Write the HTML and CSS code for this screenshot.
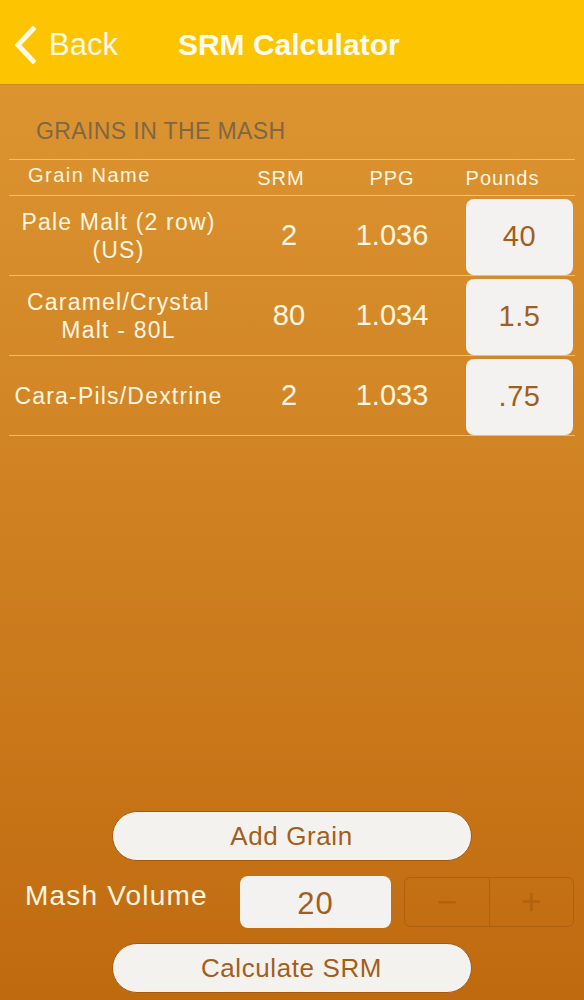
FILE: index.html
```html
<!DOCTYPE html>
<html lang="en">
<head>
  <meta charset="UTF-8" />
  <meta name="viewport" content="width=device-width, initial-scale=1.0" />
  <title>SRM Calculator</title>
  <link rel="stylesheet" href="styles.css">
</head>
<body>
  <header class="navbar">
    <a class="back" href="#">
      <svg class="chevron" width="24" height="38" viewBox="0 0 24 38">
        <path d="M20 3 L5 19 L20 35" fill="none" stroke="#fff8e6" stroke-width="5" stroke-linecap="square"/>
      </svg>
      <span>Back</span>
    </a>
    <h1 class="title">SRM Calculator</h1>
  </header>

  <main class="content">
    <h2 class="section-title">GRAINS IN THE MASH</h2>

    <div class="grain-table">
      <div class="row head">
        <div class="cell name">Grain Name</div>
        <div class="cell srm">SRM</div>
        <div class="cell ppg">PPG</div>
        <div class="cell lbs">Pounds</div>
      </div>

      <div class="row">
        <div class="cell name">Pale Malt (2 row)<br>(US)</div>
        <div class="cell srm">2</div>
        <div class="cell ppg">1.036</div>
        <div class="cell lbs"><span class="amount">40</span></div>
      </div>

      <div class="row">
        <div class="cell name">Caramel/Crystal<br>Malt - 80L</div>
        <div class="cell srm">80</div>
        <div class="cell ppg">1.034</div>
        <div class="cell lbs"><span class="amount">1.5</span></div>
      </div>

      <div class="row">
        <div class="cell name">Cara-Pils/Dextrine</div>
        <div class="cell srm">2</div>
        <div class="cell ppg">1.033</div>
        <div class="cell lbs"><span class="amount">.75</span></div>
      </div>
    </div>

    <div class="controls">
      <button class="pill">Add Grain</button>

      <div class="volume">
        <label class="volume-label" for="volume">Mash Volume</label>
        <input id="volume" class="volume-input" value="20">
        <div class="stepper">
          <span class="step">&minus;</span>
          <span class="step">+</span>
        </div>
      </div>

      <button class="pill">Calculate SRM</button>
    </div>
  </main>
</body>
</html>
```

FILE: styles.css
```css
html, body {
  margin: 0;
  padding: 0;
}
body {
  font-family: 'Liberation Sans', Arial, sans-serif;
  width: 584px;
  height: 1000px;
  display: flex;
  flex-direction: column;
  background: linear-gradient(#de9833, #d18424 45%, #c06a0f);
  color: #fff6e0;
  overflow: hidden;
}
.navbar {
  height: 84px;
  background-color: #fdc402;
  border-bottom: 1px solid #c98d1a;
  display: flex;
  align-items: center;
  flex-shrink: 0;
}
.back {
  display: flex;
  align-items: center;
  color: #fff8e6;
  text-decoration: none;
  font-size: 31px;
  margin-left: 13px;
  margin-top: 6px;
}
.back span {
  margin-left: 12px;
}
.title {
  margin: 6px 0 0 60px;
  font-size: 30px;
  font-weight: 700;
  color: #fffbf0;
}
.content {
  flex: 1;
  display: flex;
  flex-direction: column;
  padding: 0 9px 7px 9px;
}
.section-title {
  margin: 33px 0 0 27px;
  height: 41px;
  font-size: 23px;
  letter-spacing: 0.4px;
  font-weight: 400;
  color: #7d6748;
}
.grain-table {
  border-top: 1px solid rgba(255, 232, 190, 0.55);
}
.row {
  display: flex;
  height: 79px;
  border-bottom: 1px solid rgba(255, 232, 190, 0.55);
  align-items: center;
}
.row.head {
  height: 35px;
  font-size: 20px;
  letter-spacing: 1px;
}
.cell {
  text-align: center;
}
.name {
  width: 219px;
  font-size: 23px;
  letter-spacing: 1.2px;
  line-height: 28px;
}
.srm {
  width: 122px;
  font-size: 29px;
}
.ppg {
  width: 84px;
  font-size: 29px;
}
.lbs {
  flex: 1;
  display: flex;
  justify-content: flex-end;
}
.head .name {
  text-align: left;
  padding-left: 19px;
  box-sizing: border-box;
  font-size: 20px;
  letter-spacing: 1.5px;
  margin-top: -5px;
}
.head .srm {
  font-size: 20px;
  padding-right: 16px;
  box-sizing: border-box;
  margin-top: 2px;
}
.head .ppg {
  font-size: 20px;
  margin-top: 2px;
}
.head .lbs {
  justify-content: center;
  padding-right: 4px;
  margin-top: 2px;
}
.amount {
  width: 107px;
  height: 76px;
  margin: 2px 2px 0 0;
  background-color: #f3f2f0;
  border-radius: 8px;
  color: #a35e1b;
  font-size: 29px;
  letter-spacing: 0.5px;
  display: flex;
  align-items: center;
  justify-content: center;
}
.controls {
  margin-top: auto;
  display: flex;
  flex-direction: column;
  align-items: center;
  gap: 15px;
}
.pill {
  width: 360px;
  height: 50px;
  border-radius: 25px;
  border: 1px solid #a8580c;
  background-color: #f4f2ef;
  color: #a35e1b;
  font-family: 'Liberation Sans', Arial, sans-serif;
  font-size: 26px;
  letter-spacing: 0.6px;
  margin-right: 1px;
}
.volume {
  display: flex;
  align-items: center;
  align-self: stretch;
  height: 52px;
}
.volume-label {
  font-size: 28px;
  letter-spacing: 1.2px;
  margin-left: 16px;
  margin-top: -13px;
  width: 215px;
}
.volume-input {
  width: 151px;
  height: 52px;
  box-sizing: border-box;
  border: none;
  border-radius: 8px;
  background-color: #f3f2f0;
  color: #a35e1b;
  font-family: 'Liberation Sans', Arial, sans-serif;
  font-size: 31px;
  letter-spacing: 1px;
  text-align: center;
  padding: 4px 0 0;
}
.stepper {
  margin-left: 13px;
  width: 170px;
  height: 50px;
  box-sizing: border-box;
  border: 1px solid rgba(150, 80, 10, 0.45);
  border-radius: 6px;
  display: flex;
}
.step {
  flex: 1;
  display: flex;
  align-items: center;
  justify-content: center;
  font-size: 36px;
  color: rgba(150, 80, 10, 0.4);
}
.step + .step {
  border-left: 1px solid rgba(150, 80, 10, 0.45);
}
```
